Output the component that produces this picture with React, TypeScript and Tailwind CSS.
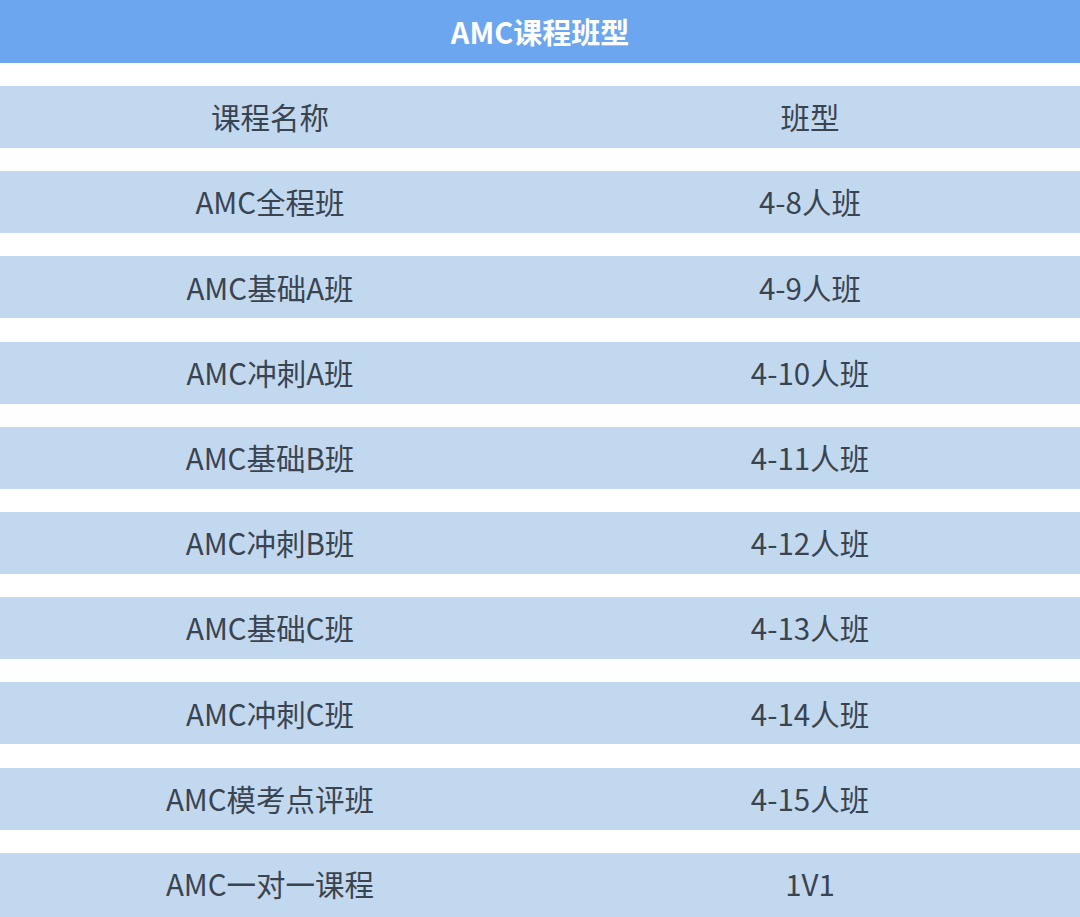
const rows: [string, string][] = [
  ["课程名称", "班型"],
  ["AMC全程班", "4-8人班"],
  ["AMC基础A班", "4-9人班"],
  ["AMC冲刺A班", "4-10人班"],
  ["AMC基础B班", "4-11人班"],
  ["AMC冲刺B班", "4-12人班"],
  ["AMC基础C班", "4-13人班"],
  ["AMC冲刺C班", "4-14人班"],
  ["AMC模考点评班", "4-15人班"],
  ["AMC一对一课程", "1V1"],
];

const App = () => {
  return (
    <div
      className="w-[1080px] h-[917px] overflow-hidden bg-white"
      style={{ fontFamily: '"Noto Sans CJK SC", "Noto Sans", sans-serif' }}
    >
      <div className="h-[63px] bg-[#6ca6ef] flex items-center justify-center">
        <span className="text-[29px] font-bold text-white leading-none">AMC课程班型</span>
      </div>
      <div className="flex flex-col gap-[23.2px] pt-[23px]">
        {rows.map(([name, size], i) => (
          <div
            key={i}
            className={`grid grid-cols-2 bg-[#c2d8ef] text-[29.5px] text-[#3a4450] leading-none ${
              i === rows.length - 1 ? "h-[66px] pb-[4px]" : "h-[62px]"
            }`}
          >
            <div className="flex items-center justify-center">{name}</div>
            <div className="flex items-center justify-center">{size}</div>
          </div>
        ))}
      </div>
    </div>
  );
};

export default App;
